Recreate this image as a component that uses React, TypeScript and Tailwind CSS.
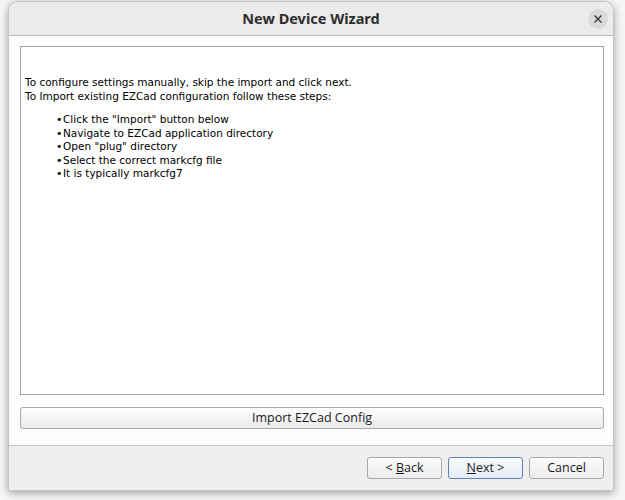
import React from "react";

const bullets = [
  'Click the "Import" button below',
  "Navigate to EZCad application directory",
  'Open "plug" directory',
  "Select the correct markcfg file",
  "It is typically markcfg7",
];

function WizButton({ children, primary }: { children: React.ReactNode; primary?: boolean }) {
  return (
    <button
      className={
        primary
          ? "h-[22px] w-[75px] rounded-[3px] border border-[#5b84b8] bg-gradient-to-b from-[#f7fafd] to-[#e6edf5] text-[12.5px] text-[#1a1a1a]"
          : "h-[22px] w-[75px] rounded-[3px] border border-[#a9a9a9] bg-gradient-to-b from-[#fdfdfd] to-[#ebebeb] text-[12.5px] text-[#1a1a1a]"
      }
      style={{ fontFamily: '"Open Sans", "Noto Sans", sans-serif' }}
    >
      {children}
    </button>
  );
}

export default function App() {
  return (
    <div className="h-[500px] w-[625px] overflow-hidden bg-[#f6f6f6] pl-[8px] pt-[1px]">
      <div className="flex h-[490px] w-[606px] flex-col overflow-hidden rounded-t-[10px] border border-[#c4c4c4] bg-white shadow-[0_2px_9px_rgba(0,0,0,0.35)]">
        {/* title bar */}
        <div className="relative flex h-[34px] shrink-0 items-center justify-center border-b border-[#b9b9b9] bg-[#ebebeb]">
          <span
            className="text-[14.5px] font-bold text-[#2e2e2e]"
            style={{ fontFamily: '"Noto Sans", "Open Sans", sans-serif' }}
          >
            New Device Wizard
          </span>
          <div className="absolute right-[5px] top-[7px] flex h-[20px] w-[20px] items-center justify-center rounded-full bg-[#dadada]">
            <svg width="8" height="8" viewBox="0 0 8 8">
              <path d="M0.5 0.5 L7.5 7.5 M7.5 0.5 L0.5 7.5" stroke="#333" strokeWidth="1.3" />
            </svg>
          </div>
        </div>

        {/* body */}
        <div className="flex flex-col bg-[#fdfdfd] pl-[11px] pr-[9px] pt-[10px]">
          <div
            className="h-[349px] border border-[#a3a3a3] bg-white pl-[4px] pt-[29px] text-[10.5px] leading-[13.5px] text-black"
            style={{ fontFamily: '"DejaVu Sans", sans-serif' }}
          >
            <div>To configure settings manually, skip the import and click next.</div>
            <div>To Import existing EZCad configuration follow these steps:</div>
            <ul className="mt-[10px] pl-[31px]">
              {bullets.map((b) => (
                <li key={b} className="flex">
                  <span className="mr-[1px] w-[6px] text-[11px]">•</span>
                  <span>{b}</span>
                </li>
              ))}
            </ul>
          </div>
          <button
            className="mt-[12px] h-[22px] rounded-[3px] border border-[#a9a9a9] bg-gradient-to-b from-[#fdfdfd] to-[#ebebeb] text-[12.5px] text-[#1a1a1a]"
            style={{ fontFamily: '"Open Sans", "Noto Sans", sans-serif' }}
          >
            Import EZCad Config
          </button>
          <div className="h-[16px]" />
        </div>

        {/* footer */}
        <div className="flex flex-1 items-start justify-end gap-[6px] border-t border-[#c4c4c4] bg-[#efefef] pr-[9px] pt-[11px]">
          <WizButton>
            &lt; <span className="underline">B</span>ack
          </WizButton>
          <WizButton primary>
            <span className="underline">N</span>ext &gt;
          </WizButton>
          <WizButton>Cancel</WizButton>
        </div>
      </div>
    </div>
  );
}
